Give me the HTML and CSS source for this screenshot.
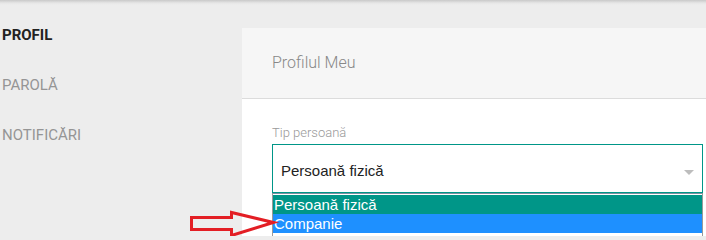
FILE: index.html
```html
<!DOCTYPE html>
<html lang="ro">
<head>
<meta charset="utf-8">
<title>Profil</title>
<link rel="stylesheet" href="styles.css">
</head>
<body>
<div class="shade"></div>
<div class="layout">
  <nav class="sidebar">
    <a class="nav-item active">PROFIL</a>
    <a class="nav-item">PAROLĂ</a>
    <a class="nav-item">NOTIFICĂRI</a>
  </nav>
  <section class="panel">
    <header class="panel-head">Profilul Meu</header>
    <div class="panel-body">
      <label class="field-label">Tip persoană</label>
      <div class="select-wrap">
        <div class="select">
          <span class="select-value">Persoană fizică</span>
          <span class="caret"></span>
        </div>
        <ul class="dropdown">
          <li class="option selected">Persoană fizică</li>
          <li class="option hover">Companie</li>
        </ul>
      </div>
    </div>
  </section>
</div>
<svg class="pointer-arrow" width="100" height="30" viewBox="188 209 100 30">
  <polygon points="191.5,217.5 231.5,217.5 231.5,212.5 273.5,222.5 231.5,235.5 231.5,229.5 191.5,229.5" fill="none" stroke="#e31e24" stroke-width="3" stroke-linejoin="miter"/>
</svg>
</body>
</html>
```
FILE: styles.css
```css
html, body {
  margin: 0;
  height: 236px;
  overflow: hidden;
}
body {
  background: #ededed;
  font-family: Roboto, "Liberation Sans", sans-serif;
  position: relative;
}
.shade {
  height: 5px;
  background: linear-gradient(#c9c9c9, #e6e6e6 60%, #ededed);
}
.layout {
  display: flex;
  height: 231px;
}
.sidebar {
  width: 240px;
  padding: 20px 0 0 2px;
  display: flex;
  flex-direction: column;
  flex-shrink: 0;
}
.nav-item {
  font-size: 15px;
  line-height: 20px;
  height: 50px;
  color: #959595;
}
.nav-item.active {
  color: #222;
  font-weight: 700;
}
.panel {
  flex: 1;
  margin-top: 23px;
  background: #fff;
}
.panel-head {
  height: 70px;
  line-height: 70px;
  padding-left: 30px;
  background: #f6f6f6;
  border-bottom: 1px solid #dcdcdc;
  font-size: 16px;
  font-weight: 300;
  color: #888;
}
.panel-body {
  padding: 26px 3px 0 30px;
}
.field-label {
  display: block;
  font-size: 13px;
  line-height: 16px;
  font-weight: 300;
  color: #999;
  margin-bottom: 3px;
}
.select-wrap {
  position: relative;
}
.select {
  height: 49px;
  box-sizing: border-box;
  border: 1px solid #009688;
  display: flex;
  align-items: center;
  justify-content: space-between;
  padding: 4px 8px 0 8px;
  font-family: "Liberation Sans", Arial, sans-serif;
  font-size: 15px;
  color: #222;
}
.caret {
  width: 0;
  height: 0;
  border-left: 5px solid transparent;
  border-right: 5px solid transparent;
  border-top: 5px solid #bdbdbd;
  margin-top: 4px;
}
.dropdown {
  position: absolute;
  top: 100%;
  left: 0;
  right: 0;
  margin: 0;
  padding: 1px 0 6px;
  list-style: none;
  background: #fff;
  border: 1px solid #9a9a9a;
  border-top-color: #7f8fa0;
  font-family: "Liberation Sans", Arial, sans-serif;
  font-size: 15px;
}
.option {
  height: 19px;
  line-height: 19px;
  padding-left: 1px;
  color: #fff;
}
.option.selected {
  background: #009688;
}
.option.hover {
  background: #1e90ff;
}
.pointer-arrow {
  position: absolute;
  left: 188px;
  top: 209px;
}
```
